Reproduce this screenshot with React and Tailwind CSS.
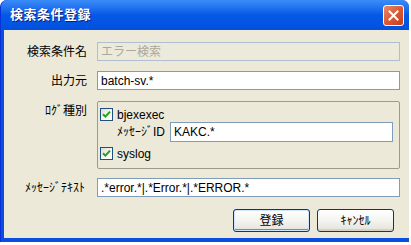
import React from "react";

const font = { fontFamily: '"Liberation Sans", "Noto Sans CJK JP", sans-serif' };

function Check() {
  return (
    <span className="w-[13px] h-[13px] border border-[#1c5180] bg-gradient-to-br from-[#dcdcd7] via-[#f4f4f0] to-white flex items-center justify-center shrink-0">
      <svg width="9" height="9" viewBox="0 0 9 9">
        <path d="M1 4.2 L3.4 6.6 L8 1.6" stroke="#21a121" strokeWidth="2" fill="none" />
      </svg>
    </span>
  );
}

function Btn({ children, def }) {
  return (
    <div
      className={
        "w-[77px] h-[23px] rounded-[3px] border border-[#003c74] flex items-center justify-center text-[12px] text-black bg-gradient-to-b from-white via-[#f4f4f0] to-[#e3e2da] " +
        (def ? "shadow-[inset_0_0_0_1px_#cee7ff,inset_0_-1px_0_1px_#6982ee]" : "shadow-[inset_0_-2px_0_0_#d6d0c5]")
      }
    >
      {children}
    </div>
  );
}

export default function App() {
  return (
    <div className="w-[411px] h-[245px] bg-white" style={font}>
      <div className="w-[409px] h-[242px] rounded-t-[7px] bg-[#0a4ee0] flex flex-col border-l border-[#0831d9]">
        <div className="h-[30px] rounded-t-[7px] bg-gradient-to-b from-[#3b8cf7] via-[#0558e6] to-[#0251de] flex items-center pl-[9px] pr-[5px] shrink-0">
          <span className="text-white font-bold text-[13px] tracking-[0.5px] [text-shadow:1px_1px_0_#0a1e7a]">
            検索条件登録
          </span>
          <div className="ml-auto w-[21px] h-[21px] rounded-[3px] border border-white bg-gradient-to-br from-[#e8896c] via-[#d95a33] to-[#c2401b] flex items-center justify-center">
            <svg width="11" height="11" viewBox="0 0 11 11">
              <path d="M1.5 1.5 L9.5 9.5 M9.5 1.5 L1.5 9.5" stroke="white" strokeWidth="2" strokeLinecap="square" />
            </svg>
          </div>
        </div>
        <div className="flex-1 mb-[4px] ml-[3px] bg-[#ece9d8] flex flex-col pt-[12px] pr-[9px] pb-[6px] text-[12px] text-black">
          <div className="flex items-center h-[19px]">
            <div className="w-[93px] pr-[10px] text-right whitespace-nowrap">検索条件名</div>
            <div className="flex-1 h-[19px] border border-[#afbfd0] bg-[#ebeadb] text-[#aca899] flex items-center pl-[3px]">エラー検索</div>
          </div>
          <div className="flex items-center h-[19px] mt-[10px]">
            <div className="w-[93px] pr-[10px] text-right whitespace-nowrap">出力元</div>
            <div className="flex-1 h-[19px] border border-[#7f9db9] bg-white flex items-center pl-[3px]">batch-sv.*</div>
          </div>
          <div className="flex mt-[11px]">
            <div className="w-[93px] pr-[10px] text-right pt-[1px] whitespace-nowrap">ﾛｸﾞ種別</div>
            <div className="flex-1 h-[68px] border border-[#9a9a8e] rounded-[2px] flex flex-col pl-[2px] pr-[6px] pt-[6px]">
              <div className="flex items-center gap-[4px] h-[13px]">
                <Check />
                <span>bjexexec</span>
              </div>
              <div className="flex items-center mt-[1px] h-[20px]">
                <span className="w-[70px] pl-[17px] whitespace-nowrap">ﾒｯｾｰｼﾞID</span>
                <div className="flex-1 h-[20px] border border-[#7f9db9] bg-white flex items-center pl-[3px]">KAKC.*</div>
              </div>
              <div className="flex items-center gap-[4px] h-[13px] mt-[5px]">
                <Check />
                <span>syslog</span>
              </div>
            </div>
          </div>
          <div className="flex items-center h-[19px] mt-[9px]">
            <div className="w-[93px] pr-[12px] text-right whitespace-nowrap">ﾒｯｾｰｼﾞﾃｷｽﾄ</div>
            <div className="flex-1 h-[19px] border border-[#7f9db9] bg-white flex items-center pl-[3px]">.*error.*|.*Error.*|.*ERROR.*</div>
          </div>
          <div className="flex justify-end gap-[7px] mt-[12px] pr-[6px]">
            <Btn def>登録</Btn>
            <Btn>ｷｬﾝｾﾙ</Btn>
          </div>
        </div>
      </div>
    </div>
  );
}
